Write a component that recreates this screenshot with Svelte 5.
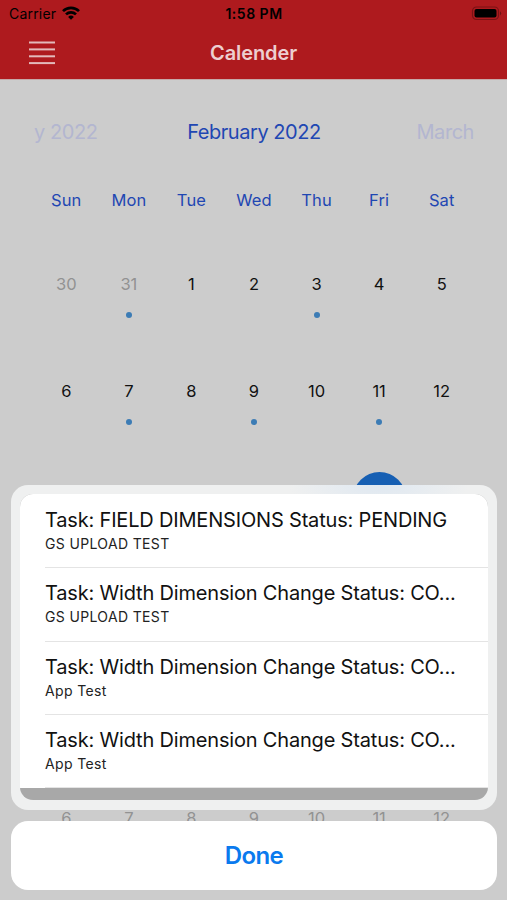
<script>
const weekdays = ["Sun", "Mon", "Tue", "Wed", "Thu", "Fri", "Sat"]

const withEvents = [1, 4, 8, 10, 12]
const today = 19

// weeks 3-5 sit behind the sheet, so their numbers are left out
const covered = (i) => i >= 14 && i < 35

// the grid starts on Sunday, January 30
const days = Array.from({ length: 42 }, (_, i) => {
    const date = new Date(2022, 0, 30 + i)
    return {
        label: covered(i) ? "" : date.getDate(),
        outside: date.getMonth() !== 1,
        event: withEvents.includes(i),
        selected: i === today,
    }
})

const tasks = [
    { title: "Task: FIELD DIMENSIONS Status: PENDING", project: "GS UPLOAD TEST" },
    { title: "Task: Width Dimension Change Status: CO...", project: "GS UPLOAD TEST" },
    { title: "Task: Width Dimension Change Status: CO...", project: "App Test" },
    { title: "Task: Width Dimension Change Status: CO...", project: "App Test" },
]
</script>

<div class="screen">
    <header>
        <div class="status">
            <div class="carrier">
                <span>Carrier</span>
                <svg width="18" height="14" viewBox="0 0 18 14" fill="none" stroke="#000" stroke-width="2.7">
                    <path d="M1 5.1A11.5 11.5 0 0 1 17 5.1"></path>
                    <path d="M4 8.4A7.2 7.2 0 0 1 14 8.4"></path>
                    <path d="M9 13.8L6.1 10.9A4.1 4.1 0 0 1 11.9 10.9Z" fill="#000" stroke="none"></path>
                </svg>
            </div>
            <span class="time">1:58 PM</span>
            <svg class="battery" width="31" height="15" viewBox="0 0 31 15">
                <rect x="1.5" y="1" width="26" height="12.5" rx="4" fill="none" stroke="#000" stroke-opacity="0.3" stroke-width="1.2"></rect>
                <rect x="3.5" y="3" width="22" height="8.5" rx="2" fill="#000"></rect>
                <path d="M29 5.2a2.5 2.5 0 0 1 0 4.2z" fill="#000" fill-opacity="0.35"></path>
            </svg>
        </div>
        <div class="nav">
            <button class="menu" aria-label="Menu">
                <svg width="26" height="24" viewBox="0 0 26 24" stroke="#e3babb" stroke-width="2">
                    <line x1="0" y1="1.5" x2="26" y2="1.5"></line>
                    <line x1="0" y1="8.4" x2="26" y2="8.4"></line>
                    <line x1="0" y1="15.3" x2="26" y2="15.3"></line>
                    <line x1="0" y1="22.1" x2="26" y2="22.1"></line>
                </svg>
            </button>
            <h1>Calender</h1>
        </div>
    </header>

    <div class="months">
        <span class="prev">y 2022</span>
        <span class="current">February 2022</span>
        <span class="next">March</span>
    </div>

    <div class="weekdays">
        {#each weekdays as day}
            <span>{day}</span>
        {/each}
    </div>

    <div class="days">
        {#each days as day}
            <div class="day" class:outside={day.outside} class:selected={day.selected}>
                <span class="number">{day.label}</span>
                {#if day.event}
                    <span class="dot"></span>
                {/if}
            </div>
        {/each}
    </div>

    <div class="overlay">
        <div class="sheet">
            <ul>
                {#each tasks as task}
                    <li>
                        <div class="title">{task.title}</div>
                        <div class="project">{task.project}</div>
                    </li>
                {/each}
            </ul>
        </div>
        <button class="done">Done</button>
    </div>
</div>

<style>
:global(body) {
    margin: 0;
    background: #ccc;
}
.screen {
    position: relative;
    height: 900px;
    overflow: hidden;
    background: #ccc;
    font-family: Inter, "Liberation Sans", sans-serif;
    color: #111;
}
button {
    padding: 0;
    border: none;
    background: none;
    font-family: inherit;
    cursor: pointer;
}

header {
    height: 80px;
    background: #ae1a1e;
    border-bottom: 1px solid #c6a9a9;
    box-sizing: border-box;
}
.status {
    display: grid;
    grid-template-columns: 1fr auto 1fr;
    align-items: center;
    height: 27px;
    padding: 0 5px 0 9px;
    color: #000;
    font-size: 14px;
    letter-spacing: 0.2px;
}
.carrier {
    display: flex;
    align-items: center;
    gap: 6px;
}
.carrier svg {
    margin-top: -2px;
}
.carrier span {
    width: 47px;
}
.time {
    margin-left: -3px;
    font-weight: 600;
    letter-spacing: 0.5px;
}
.battery {
    justify-self: end;
}
.nav {
    display: grid;
    grid-template-columns: 1fr auto 1fr;
    align-items: center;
    height: 51px;
    padding: 0 29px;
}
.menu {
    display: flex;
    justify-self: start;
}
h1 {
    margin: 0;
    color: #edced0;
    font-size: 20px;
    font-weight: 600;
    letter-spacing: -0.1px;
}

.months {
    display: grid;
    grid-template-columns: 1fr auto 1fr;
    align-items: center;
    height: 105px;
    padding: 0 33px 2px 34px;
    box-sizing: border-box;
    font-size: 20px;
    letter-spacing: -0.45px;
    color: #b3b6d0;
}
.current {
    color: #1f47b3;
}
.next {
    text-align: right;
}

.weekdays,
.days {
    display: grid;
    grid-template-columns: repeat(7, 1fr);
    padding: 0 34px 0 35px;
    text-align: center;
}
.weekdays {
    height: 32px;
    line-height: 31px;
    color: #1f47b3;
    font-size: 16.5px;
    letter-spacing: 0.1px;
}
.days {
    grid-auto-rows: 106.8px;
    padding-top: 41px;
}
.day {
    display: flex;
    flex-direction: column;
    align-items: center;
    font-size: 16.5px;
    font-weight: 400;
}
.number {
    width: 53px;
    height: 53px;
    line-height: 53px;
    border-radius: 50%;
}
.outside .number {
    color: #929292;
}
.selected .number {
    background: #165fb3;
    color: #fff;
}
.dot {
    width: 6px;
    height: 6px;
    margin-top: 1px;
    border-radius: 50%;
    background: #3c7cb5;
}

.overlay {
    position: absolute;
    left: 11px;
    right: 10px;
    bottom: 10px;
}
.sheet {
    height: 325px;
    padding: 9px 9px 10px;
    box-sizing: border-box;
    border-radius: 17px;
    background: radial-gradient(ellipse 90px 30px at 368px 0, #dfe8f1, rgba(223, 232, 241, 0)), #eff0f0;
}
ul {
    height: 100%;
    margin: 0;
    padding: 0;
    overflow: hidden;
    list-style: none;
    border-radius: 13px;
    background: #a8a8a8;
}
li {
    height: 73.3px;
    padding: 11px 0 0 25px;
    box-sizing: border-box;
    background: linear-gradient(#e4e4e4, #e4e4e4) 25px 100% / 100% 1px no-repeat #fff;
}
li:first-child {
    height: 74.3px;
    padding-top: 12px;
}
.title {
    color: #111;
    font-size: 20px;
    line-height: 28px;
    letter-spacing: -0.18px;
    white-space: nowrap;
}
.project {
    color: #222;
    font-size: 14px;
    line-height: 20px;
    letter-spacing: 0.35px;
}
.done {
    display: block;
    width: 100%;
    height: 69px;
    margin-top: 11px;
    border-radius: 17px;
    background: #fff;
    color: #0a7aee;
    font-size: 24px;
    font-weight: 600;
    letter-spacing: -0.6px;
}
</style>
